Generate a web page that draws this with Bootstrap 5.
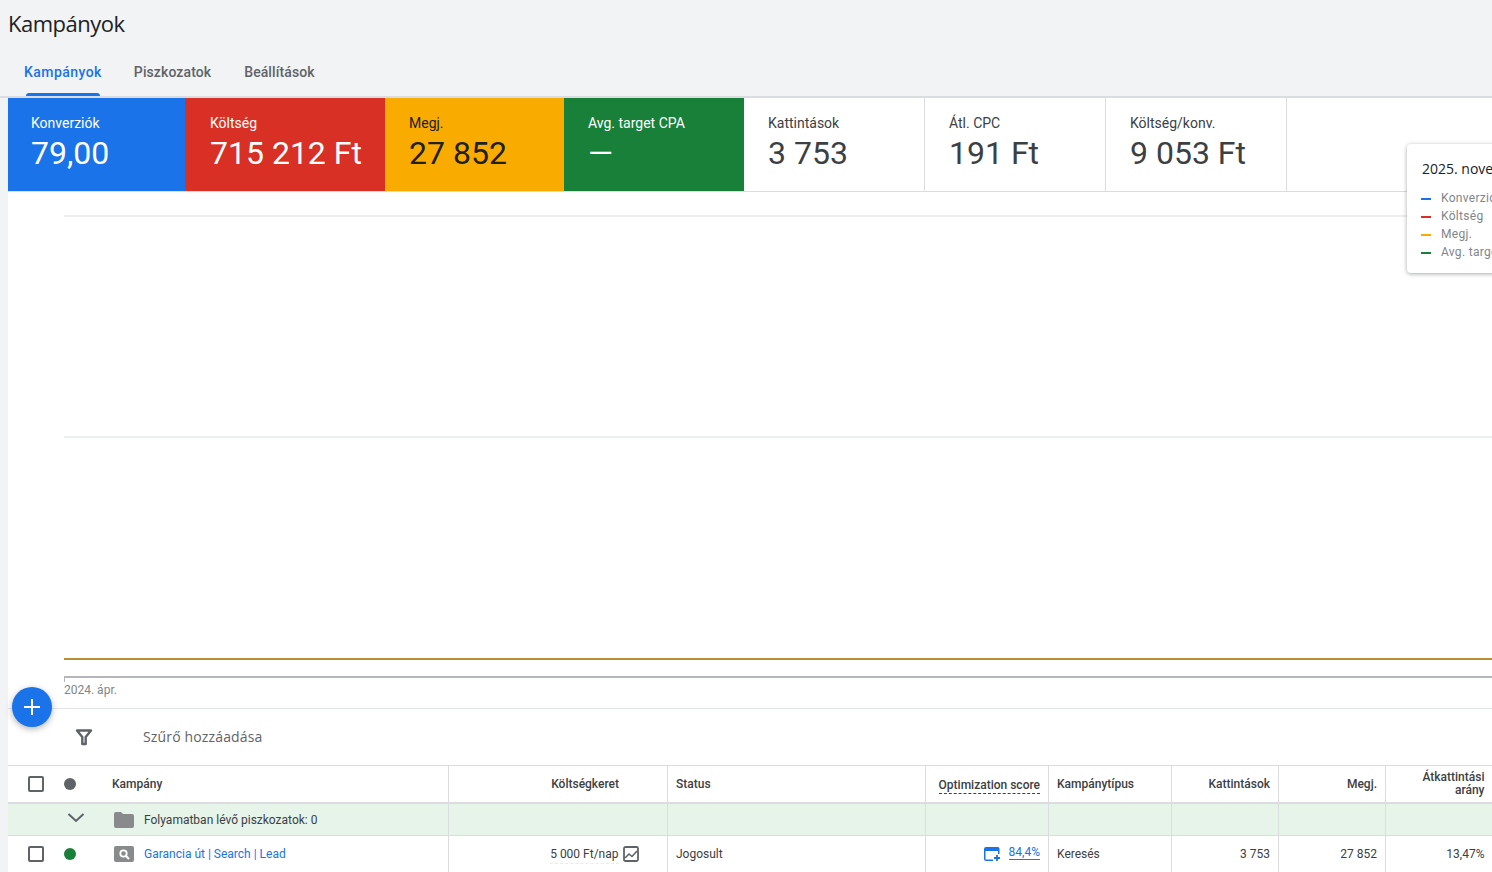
<!DOCTYPE html>
<html lang="hu">
<head>
    <meta charset="UTF-8">
    <meta name="viewport" content="width=device-width, initial-scale=1.0">
    <title>Kampányok</title>
    <link rel="stylesheet" href="https://cdn.jsdelivr.net/npm/bootstrap@5.3.0/dist/css/bootstrap.min.css">
    <style>
        html, body { height: 872px; overflow: hidden; }
        body { background: #f1f3f4; font-family: Roboto, "Liberation Sans", sans-serif; color: #3c4043; position: relative; }
        .page-title { font-family: "Open Sans", Roboto, sans-serif; font-size: 22px; line-height: 30px; color: #202124; padding: 8px 0 0 8px; height: 48px; margin: 0; font-weight: 400; letter-spacing: -.5px; }
        .tab-row { height: 50px; padding-left: 8px; border-bottom: 2px solid #dadce0; }
        .tab-item { padding: 0 16px; font-size: 14px; line-height: 48px; height: 48px; color: #5f6368; font-weight: 500; position: relative; letter-spacing: .1px; }
        .tab-item + .tab-item + .tab-item { margin-left: 1px; }
        .tab-item.is-on { color: #1a73e8; letter-spacing: .45px; }
        .tab-item.is-on::after { content: ""; position: absolute; left: 18px; right: 18px; bottom: 0; height: 3px; background: #1a73e8; border-radius: 3px 3px 0 0; }
        .main-panel { margin-left: 8px; background: #fff; width: 1484px; height: 774px; }
        .score-row { height: 94px; border-bottom: 1px solid #dadce0; }
        .score-card { height: 93px; padding: 16px 0 0 24px; border-right: 1px solid #dadce0; color: #3c4043; flex: none; }
        .score-card .lbl { font-size: 14px; line-height: 18px; }
        .score-card .val { font-size: 32px; line-height: 43px; }
        .sc-blue { background: #1a73e8; color: #fff; border-right: 0; padding-left: 23px; }
        .sc-red { background: #d93025; color: #fff; border-right: 0; padding-left: 25px; }
        .sc-yellow { background: #f9ab00; color: #202124; border-right: 0; }
        .sc-green { background: #188038; color: #fff; border-right: 0; }
        .chart-wrap { height: 517px; padding: 23px 0 0 56px; border-bottom: 1px solid #e3e5e8; }
        .grid-line { border-top: 2px solid #eceef0; height: 221px; }
        .grid-line + .grid-line { height: 222px; }
        .line-orange { border-top: 2px solid #b98d33; height: 18px; }
        .line-axis { border-top: 2px solid #b4b6b9; height: 14px; font-size: 12px; line-height: 24px; color: #80868b; position: relative; }
        .line-axis::before { content: ""; position: absolute; left: 0; top: 0; width: 1px; height: 4px; background: #b4b6b9; }
        .filter-row { height: 57px; border-bottom: 1px solid #dadce0; padding: 0 0 1px 66px; }
        .filter-text { font-family: "Open Sans", Roboto, sans-serif; font-size: 14px; color: #5f6368; margin-left: 49px; letter-spacing: .15px; }
        .camp-table { table-layout: fixed; width: 1484px; border-collapse: collapse; font-size: 12px; color: #3c4043; margin: 0; }
        .camp-table th { font-weight: 500; height: 37px; border-bottom: 2px solid #dadce0; padding: 0 7.5px 0 8.5px; line-height: 13px; vertical-align: middle; }
        .camp-table td { padding: 0 7.5px 0 8.5px; vertical-align: middle; border-bottom: 1px solid #dadce0; }
        .camp-table th.name-head { padding-left: 8px; }
        .camp-table .edge { border-left: 1px solid #dadce0; }
        .camp-table tr.draft-row td { background: #e6f4ea; height: 32px; padding-top: 1px; }
        .camp-table tr.data-row td { height: 38px; }
        .check-box { width: 16px; height: 16px; border: 2px solid #5f6368; border-radius: 2px; display: block; margin-left: 11.5px; }
        .status-dot { width: 12px; height: 12px; border-radius: 50%; display: block; margin-left: -.5px; }
        .opt-head { border-bottom: 1px dashed #3c4043; padding-bottom: 1px; position: relative; top: 1px; }
        .camp-link { color: #1a73e8; }
        .budget-text { border-bottom: 1px dashed #e8eaed; }
        .opt-link { color: #1a73e8; border-bottom: 1px solid #1a73e8; font-size: 12px; line-height: 14px; display: inline-block; margin: 0 0 3px 8px; }
        .float-add { position: absolute; left: 12px; top: 687px; width: 40px; height: 40px; border-radius: 50%; background: #1a73e8; box-shadow: 0 2px 6px rgba(60,64,67,.4); z-index: 5; }
        .chart-tip { position: absolute; left: 1407px; top: 144px; width: 200px; height: 129px; background: #fff; border-radius: 4px; box-shadow: 0 1px 4px rgba(60,64,67,.45); padding: 15px; z-index: 4; }
        .tip-title { font-family: "Open Sans", Roboto, sans-serif; font-size: 14px; color: #202124; line-height: 20px; margin-bottom: 10px; white-space: nowrap; font-weight: 500; }
        .tip-line { font-size: 12px; line-height: 18px; color: #80868b; white-space: nowrap; letter-spacing: .3px; }
        .tip-mark { width: 10px; height: 2px; display: inline-block; margin-right: 10px; vertical-align: middle; margin-left: -1px; }
    </style>
</head>
<body>
    <h1 class="page-title">Kampányok</h1>
    <div class="tab-row d-flex">
        <div class="tab-item is-on">Kampányok</div>
        <div class="tab-item">Piszkozatok</div>
        <div class="tab-item">Beállítások</div>
    </div>

    <div class="main-panel">
        <!-- scorecards -->
        <div class="score-row d-flex">
            <div class="score-card sc-blue" style="width:177px"><div class="lbl">Konverziók</div><div class="val">79,00</div></div>
            <div class="score-card sc-red" style="width:200px"><div class="lbl">Költség</div><div class="val">715 212 Ft</div></div>
            <div class="score-card sc-yellow" style="width:179px"><div class="lbl">Megj.</div><div class="val">27 852</div></div>
            <div class="score-card sc-green" style="width:180px"><div class="lbl">Avg. target CPA</div><div class="val">—</div></div>
            <div class="score-card" style="width:181px"><div class="lbl">Kattintások</div><div class="val">3 753</div></div>
            <div class="score-card" style="width:181px"><div class="lbl">Átl. CPC</div><div class="val">191 Ft</div></div>
            <div class="score-card" style="width:181px"><div class="lbl">Költség/konv.</div><div class="val">9 053 Ft</div></div>
        </div>

        <!-- chart -->
        <div class="chart-wrap">
            <div class="grid-line"></div>
            <div class="grid-line"></div>
            <div class="line-orange"></div>
            <div class="line-axis">2024. ápr.</div>
        </div>

        <!-- filter -->
        <div class="filter-row d-flex align-items-center">
            <svg width="20" height="20" viewBox="0 0 20 20"><path d="M3 3.500h14l-5.300 6.500v7h-3.400v-7z" fill="none" stroke="#5f6368" stroke-width="2.400" stroke-linejoin="round"/></svg>
            <span class="filter-text">Szűrő hozzáadása</span>
        </div>

        <!-- table -->
        <table class="camp-table">
            <colgroup>
                <col style="width:48px"><col style="width:48px"><col style="width:344px"><col style="width:219px"><col style="width:258px"><col style="width:123px"><col style="width:123px"><col style="width:107px"><col style="width:107px"><col style="width:107px">
            </colgroup>
            <tr>
                <th><span class="check-box"></span></th>
                <th><span class="status-dot" style="background:#5f6368"></span></th>
                <th class="name-head">Kampány</th>
                <th class="edge text-end">Költségkeret<span class="d-inline-block" style="width:40px"></span></th>
                <th class="edge">Status</th>
                <th class="edge text-end"><span class="opt-head">Optimization score</span></th>
                <th class="edge">Kampánytípus</th>
                <th class="edge text-end">Kattintások</th>
                <th class="edge text-end">Megj.</th>
                <th class="edge text-end">Átkattintási arány</th>
            </tr>
            <tr class="draft-row">
                <td></td>
                <td class="p-0"><svg class="d-block" style="margin-left:10px" width="20" height="20" viewBox="0 0 20 20"><path d="M2.500 5l7.500 7 7.500-7" fill="none" stroke="#5f6368" stroke-width="2"/></svg></td>
                <td><div class="d-flex align-items-center"><svg width="20" height="16" viewBox="0 0 20 16" style="margin:0 10px 0 1.500px"><path d="M2 0h5l2 2h9a2 2 0 0 1 2 2v10a2 2 0 0 1-2 2H2a2 2 0 0 1-2-2V2a2 2 0 0 1 2-2z" fill="#888a8c"/></svg>Folyamatban lévő piszkozatok: 0</div></td>
                <td class="edge"></td><td class="edge"></td><td class="edge"></td><td class="edge"></td><td class="edge"></td><td class="edge"></td><td class="edge"></td>
            </tr>
            <tr class="data-row">
                <td><span class="check-box"></span></td>
                <td><span class="status-dot" style="background:#188038"></span></td>
                <td><div class="d-flex align-items-center"><svg width="20" height="16" viewBox="0 0 20 16" style="margin:0 10px 0 1.500px"><rect width="20" height="16" rx="2" fill="#888a8c"/><circle cx="9.500" cy="7.500" r="3.200" fill="none" stroke="#fff" stroke-width="1.800"/><path d="M12 10l3 3" stroke="#fff" stroke-width="2"/></svg><span class="camp-link">Garancia út | Search | Lead</span></div></td>
                <td class="edge"><div class="d-flex justify-content-end align-items-center gap-1" style="margin-right:20.500px"><span class="budget-text">5 000 Ft/nap</span><svg width="16" height="16" viewBox="0 0 16 16"><rect x="1" y="1" width="14" height="14" rx="1.500" fill="none" stroke="#5f6368" stroke-width="1.800"/><path d="M2 12l4-4 3 2.500 5-5.500" fill="none" stroke="#5f6368" stroke-width="1.600"/></svg></div></td>
                <td class="edge">Jogosult</td>
                <td class="edge"><div class="d-flex justify-content-end align-items-center"><svg width="18" height="16" viewBox="0 0 18 16"><path d="M3 1h12a1.500 1.500 0 0 1 1.500 1.500V8H15V5H2.500v8.500H10V15H3a2 2 0 0 1-2-2V3a2 2 0 0 1 2-2z" fill="#1a73e8"/><path d="M14 9v6M11 12h6" stroke="#1a73e8" stroke-width="1.800"/></svg><span class="opt-link">84,4%</span></div></td>
                <td class="edge">Keresés</td>
                <td class="edge text-end">3 753</td>
                <td class="edge text-end">27 852</td>
                <td class="edge text-end">13,47%</td>
            </tr>
        </table>
    </div>

    <!-- overlays -->
    <div class="chart-tip">
        <div class="tip-title">2025. november</div>
        <div class="tip-line"><span class="tip-mark" style="background:#1a73e8"></span>Konverziók</div>
        <div class="tip-line"><span class="tip-mark" style="background:#d93025"></span>Költség</div>
        <div class="tip-line"><span class="tip-mark" style="background:#f9ab00"></span>Megj.</div>
        <div class="tip-line"><span class="tip-mark" style="background:#188038"></span>Avg. target CPA</div>
    </div>
    <div class="float-add d-flex align-items-center justify-content-center">
        <svg width="18" height="18" viewBox="0 0 18 18"><path d="M9 1v16M1 9h16" stroke="#fff" stroke-width="2"/></svg>
    </div>

    <script src="https://cdn.jsdelivr.net/npm/bootstrap@5.3.0/dist/js/bootstrap.bundle.min.js"></script>
</body>
</html>
